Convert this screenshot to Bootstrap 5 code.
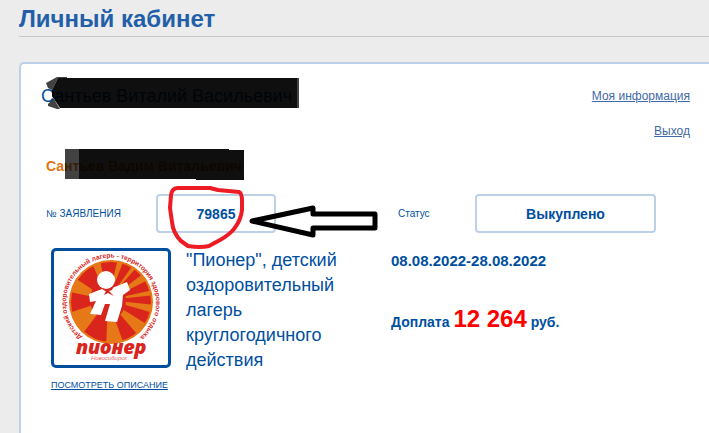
<!DOCTYPE html>
<html lang="ru">
<head>
<meta charset="utf-8">
<meta name="viewport" content="width=device-width, initial-scale=1">
<title>Личный кабинет</title>
<link href="https://cdn.jsdelivr.net/npm/bootstrap@5.3.0/dist/css/bootstrap.min.css" rel="stylesheet">
<style>
body{background:#ececec;color:#004f9f;font-family:"Liberation Sans",Arial,sans-serif;font-size:15px;line-height:20px}
a{color:inherit}
.page{padding-left:19px}
.page-title{font-size:24px;line-height:34px;padding-top:2px;color:#235fa9;border-bottom:1px solid #c8c8c8;margin-bottom:25px}
.account{background:#fff;border:2px solid #bcd0e8;border-width:2px 0 0 2px;border-top-left-radius:5px;padding:22px 19px 20px 20px}
.parent-name{font-size:18px}
.user-links{font-size:12px;gap:15px;color:#3f69a8}
.order{padding-left:5px}
.child-name{font-size:14px;line-height:20px;color:#e3730f;margin-top:15px;margin-bottom:18px}
.fields,.details{display:grid;grid-template-columns:345px 1fr}
.fields label{font-size:10px}
.num-label{width:110px}
.status-label{width:84px;padding-left:7px}
.value-box{height:39px;border:2px solid #bcd0e8;border-radius:4px;font-size:14px;padding:0;background:#fff;color:#004f9f}
.value-num{width:120px}
.value-status{width:181px}
.details{margin-top:15px}
.camp{padding-left:5px;gap:15px}
.logo{width:120px;height:120px;border:3px solid #004f9f;border-radius:5px}
.more{font-size:9px;line-height:14px;margin-top:10px}
.camp-name{font-size:18px;line-height:25px;width:160px}
.period{padding-top:3px}
.pay{margin-top:38px;font-size:14px}
.sum{font-size:24px;color:#f00}
.strike{left:-2px;top:-9px}
.strike-child{left:0;top:-7px}
.marker{left:105px;top:-14px}
</style>
<script src="https://cdn.jsdelivr.net/npm/bootstrap@5.3.0/dist/js/bootstrap.bundle.min.js"></script>
</head>
<body>
<div class="page container-fluid min-vh-100 d-flex flex-column pe-0">
<h1 class="page-title fw-bold">Личный кабинет</h1>
<main class="account flex-grow-1">
<div class="d-flex justify-content-between">
<div class="parent-name position-relative align-self-start">Сантьев Виталий Васильевич
<svg class="strike position-absolute" width="262" height="34" viewBox="39 77 262 34" aria-hidden="true"><path d="M46 83L57 77H67V78H58L52 90 52 96 60 109H57L48 106 48 104 54 98 54 91 48 88Z" opacity=".74"/><path d="M58 78H297V108H60L52 96V90Z" opacity=".94"/><path d="M297 78h2v30h-2z" opacity=".74"/></svg>
</div>
<nav class="user-links d-flex flex-column align-items-end"><a href="#">Моя информация</a><a href="#">Выход</a></nav>
</div>
<section class="order">
<h2 class="child-name fw-bold position-relative">Сантьев Вадим Витальевич
<svg class="strike-child position-absolute" width="200" height="32" viewBox="46 149 200 32" aria-hidden="true"><path d="M65 149h14v30H65z" opacity=".74"/><path d="M79 149H229V150H244V180H196V179H79Z" opacity=".94"/></svg>
</h2>
<div class="fields position-relative">
<div class="d-flex align-items-center"><label class="num-label" for="num">№ ЗАЯВЛЕНИЯ</label><input id="num" class="value-box value-num fw-bold text-center" readonly value="79865"></div>
<div class="d-flex align-items-center"><label class="status-label" for="status">Статус</label><input id="status" class="value-box value-status fw-bold text-center" readonly value="Выкуплено"></div>
<svg class="marker position-absolute pe-none" width="240" height="74" viewBox="151 180 240 74" fill="none" stroke-linejoin="round" aria-hidden="true"><path d="M171 195Q172 188 178 188L210 188 218 190 239 192Q242 193 242 201V210Q241 220 234 229 229 235 220 240L209 246Q200 248 188 246L181 241Q173 233 172 222L170 208Z" stroke="#ed1c24" stroke-width="4"/><path d="M252 221L313 208V214H375V228H313V235Z" stroke="#000" stroke-width="5"/></svg>
</div>
<div class="details">
<div class="camp d-flex align-items-start">
<div class="d-flex flex-column">
<svg class="logo" viewBox="54 251 114 114" role="img" aria-label="Пионер, Новосибирск">
<defs><clipPath id="disc"><circle cx="111" cy="302" r="40"/></clipPath><path id="ring" d="M82 337A45 45 0 1 1 140 337"/></defs>
<circle cx="111" cy="302" r="42" fill="#e67817"/>
<g clip-path="url(#disc)" fill="#da251d">
<path d="M108 300L60 290V316ZM108 300L66 272 88 254ZM108 300L98 250 120 250ZM108 300L128 250 138 258ZM108 300L143 260 151 268ZM108 300L156 276 162 288ZM108 300L166 294V306ZM108 300L164 316 156 330ZM108 300L142 340 126 350ZM108 300L106 350 78 340Z"/>
<ellipse cx="108" cy="300" rx="18" ry="20"/>
</g>
<circle cx="106" cy="280" r="9" fill="#fff"/>
<path d="M89 294L102 289 107 292 112 288 127 282 130 290 123 295 122 306 117 322 105 321 110 304H105L101 315 90 314 96 301 90 302Z" fill="#fff"/>
<path d="M102 288L108 290 114 286 112 290 109 291 114 296 108 293 104 295 106 291Z" fill="#da251d"/>
<text font-size="6.6" font-weight="700" fill="#da251d"><textPath href="#ring">Детский оздоровительный лагерь - территория здорового отдыха</textPath></text>
<text x="111" y="354" text-anchor="middle" font-family="Noto Sans, sans-serif" font-size="20" font-weight="900" font-style="italic" fill="#da251d">пионер</text>
<text x="109" y="360" text-anchor="middle" font-size="6" font-style="italic" fill="#e4685f">Новосибирск</text>
</svg>
<a class="more" href="#">ПОСМОТРЕТЬ ОПИСАНИЕ</a>
</div>
<div class="camp-name">"Пионер", детский оздоровительный лагерь круглогодичного действия</div>
</div>
<div class="fw-bold"><div class="period">08.08.2022-28.08.2022</div><div class="pay">Доплата <span class="sum">12 264</span> руб.</div></div>
</div>
</section>
</main>
</div>
</body>
</html>
